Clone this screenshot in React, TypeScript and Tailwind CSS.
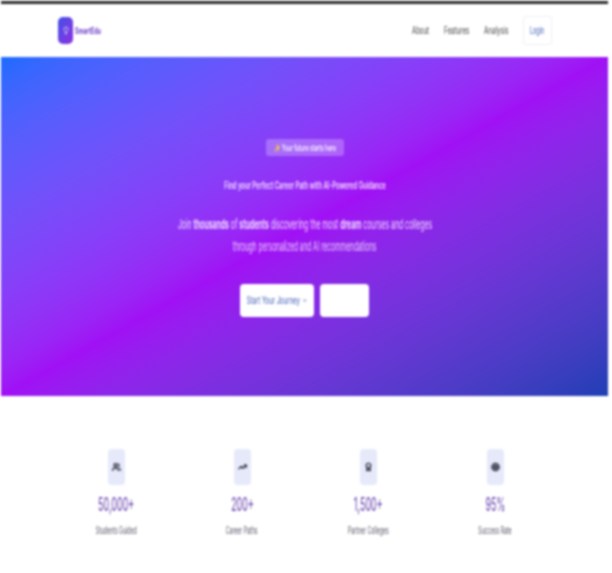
import { Users, TrendingUp, Award, Target, Lightbulb, ArrowRight } from "lucide-react";

const stats = [
  { Icon: Users, value: "50,000+", label: "Students Guided" },
  { Icon: TrendingUp, value: "200+", label: "Career Paths" },
  { Icon: Award, value: "1,500+", label: "Partner Colleges" },
  { Icon: Target, value: "95%", label: "Success Rate" },
];

export default function App() {
  return (
    <div className="min-h-[573px] w-[612px] overflow-hidden bg-white font-['Inter',sans-serif] blur-[0.8px]">
      <div className="mt-[1px] ml-[1px] h-[3px] w-[607px] bg-[#2e2e2e]" />
      <header className="flex h-[53px] items-center justify-between bg-white pl-[58px] pr-[60px]">
        <div className="flex items-center gap-[2px]">
          <div className="flex h-[27px] w-[15px] items-center justify-center rounded-[5px] bg-gradient-to-br from-[#3b4fe8] to-[#8b2be2]">
            <Lightbulb className="h-[9px] w-[8px] text-white" />
          </div>
          <span className="w-[27px] whitespace-nowrap text-[9px] font-bold text-[#6d3fc8]">
            <span className="inline-block origin-left scale-x-[0.6]">SmartEdu</span>
          </span>
        </div>
        <nav className="flex items-center text-[10px] text-[#444444]">
          <a className="w-[20px] whitespace-nowrap"><span className="inline-block origin-left scale-x-[0.6]">About</span></a>
          <a className="ml-[12px] w-[28px] whitespace-nowrap"><span className="inline-block origin-left scale-x-[0.62]">Features</span></a>
          <a className="ml-[12px] w-[26px] whitespace-nowrap"><span className="inline-block origin-left scale-x-[0.62]">Analysis</span></a>
          <button className="ml-[13px] flex h-[29px] w-[29px] items-center justify-center rounded-[3px] border border-[#eef0f6] text-[#3f5bb5]">
            <span className="scale-x-[0.55]">Login</span>
          </button>
        </nav>
      </header>
      <section className="ml-[1px] flex h-[339px] w-[607px] flex-col items-center bg-gradient-to-br from-[#1a6bff] via-[#a010f5] to-[#1e3fb5] pt-[82px] text-white">
        <div className="ml-[1px] flex h-[17px] w-[78px] items-center justify-center whitespace-nowrap rounded-[3px] bg-white/25 text-[9px] font-medium">
          <span className="scale-x-[0.56]">✨ Your future starts here</span>
        </div>
        <h1 className="mt-[23px] flex h-[12px] items-center whitespace-nowrap text-[10px] font-semibold text-[#f3dcff]">
          <span className="scale-x-[0.59]">Find your Perfect Career Path with AI-Powered Guidance</span>
        </h1>
        <p className="ml-[1px] mt-[28px] flex h-[12px] items-center whitespace-nowrap text-[13px] text-[#f0d8ff]">
          <span className="scale-x-[0.525]">Join <b>thousands</b> of <b>students</b> discovering the most <b>dream</b> courses and colleges</span>
        </p>
        <p className="mt-[10px] flex h-[12px] items-center whitespace-nowrap text-[13px] text-[#e6c8fb]">
          <span className="scale-x-[0.5]">through personalized and AI recommendations</span>
        </p>
        <div className="mt-[31px] flex gap-[6px]">
          <button className="flex h-[33px] w-[74px] items-center justify-center gap-[3px] whitespace-nowrap rounded-[4px] bg-white text-[10px] text-[#3f5bb5]">
            <span className="flex w-[52px] justify-center"><span className="scale-x-[0.6]">Start Your Journey</span></span>
            <ArrowRight className="h-[9px] w-[5px]" />
          </button>
          <button className="h-[33px] w-[49px] rounded-[4px] bg-white" />
        </div>
      </section>
      <section className="grid grid-cols-[126px_126px_127px_126px] pl-[53px] pt-[53px]">
        {stats.map(({ Icon, value, label }) => (
          <div key={label} className="flex flex-col items-center">
            <div className="flex h-[36px] w-[17px] items-center justify-center rounded-[4px] bg-[#e6e9fa]">
              <Icon className="h-[16px] w-[9px] text-[#1f1f2e]" strokeWidth={3} />
            </div>
            <div className="mt-[10px] flex h-[20px] items-center whitespace-nowrap text-[19px] font-medium text-[#7755b5]">
              <span className="scale-x-[0.46]">{value}</span>
            </div>
            <div className="mt-[9px] flex h-[12px] items-center whitespace-nowrap text-[10px] text-[#555566]">
              <span className="scale-x-[0.52]">{label}</span>
            </div>
          </div>
        ))}
      </section>
    </div>
  );
}
